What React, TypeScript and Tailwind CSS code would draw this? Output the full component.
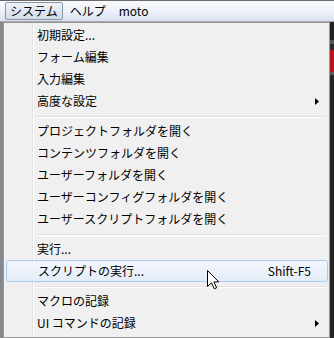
import React from "react";

type Item =
  | { type: "item"; label: string; shortcut?: string; sub?: boolean; active?: boolean }
  | { type: "sep" };

const items: Item[] = [
  { type: "item", label: "初期設定..." },
  { type: "item", label: "フォーム編集" },
  { type: "item", label: "入力編集" },
  { type: "item", label: "高度な設定", sub: true },
  { type: "sep" },
  { type: "item", label: "プロジェクトフォルダを開く" },
  { type: "item", label: "コンテンツフォルダを開く" },
  { type: "item", label: "ユーザーフォルダを開く" },
  { type: "item", label: "ユーザーコンフィグフォルダを開く" },
  { type: "item", label: "ユーザースクリプトフォルダを開く" },
  { type: "sep" },
  { type: "item", label: "実行..." },
  { type: "item", label: "スクリプトの実行...", shortcut: "Shift-F5", active: true },
  { type: "sep" },
  { type: "item", label: "マクロの記録" },
  { type: "item", label: "UI コマンドの記録", sub: true },
];

function Gutter() {
  return (
    <div className="flex h-full shrink-0">
      <div className="w-[27px] h-full border-r border-[#e2e3e3]" />
      <div className="w-px h-full bg-white" />
    </div>
  );
}

function Arrow() {
  return (
    <svg width="4" height="7" viewBox="0 0 4 7" className="ml-auto mr-[9px]">
      <polygon points="0,0 4,3.5 0,7" fill="#000" />
    </svg>
  );
}

export default function App() {
  return (
    <div
      className="relative w-[334px] h-[338px] overflow-hidden bg-[#262626] text-[12px] text-black"
      style={{ fontFamily: '"Noto Sans CJK JP", "Noto Sans", sans-serif' }}
    >
      {/* menu bar */}
      <div className="h-[22px] border-t border-[#6b6b6b] border-b border-b-[#a4a8ae] bg-gradient-to-b from-[#f7f9fc] via-[#eef2f9] to-[#d9e1ef] flex items-center">
        <div className="ml-[5px] h-[18px] px-[4px] border border-[#8a96a6] rounded-[2px] bg-gradient-to-b from-[#eef2f8] to-[#d3dbe8] flex items-center leading-none">
          システム
        </div>
        <div className="ml-[7px] px-[0px] leading-none">ヘルプ</div>
        <div className="ml-[13px] leading-none">moto</div>
      </div>

      <div className="flex h-[316px]">
        <div className="w-[3px] h-full bg-[#85888c]" />
        <div className="w-[327px] h-full border border-[#979797] bg-[#f0f0f0] pt-[1px]">
          {items.map((it, i) =>
            it.type === "sep" ? (
              <div key={i} className="h-[8px] mx-[2px] flex">
                <Gutter />
                <div className="flex-1 pt-[4px] pl-[1px] pr-[1px]">
                  <div className="h-px bg-[#e0e0e0]" />
                  <div className="h-px bg-white" />
                </div>
              </div>
            ) : it.active ? (
              <div
                key={i}
                className="h-[22px] ml-[2px] mr-[1px] flex items-center rounded-[3px] border border-[#aacbf0] bg-gradient-to-b from-[#f3f7fc] to-[#e4ecf8]"
              >
                <div className="w-[30px] shrink-0" />
                <span className="pl-[1px] whitespace-nowrap">{it.label}</span>
                <span className="ml-auto mr-[16px] whitespace-nowrap">{it.shortcut}</span>
              </div>
            ) : (
              <div key={i} className="h-[22px] ml-[2px] mr-[1px] flex items-center">
                <Gutter />
                <span className="pl-[3px] whitespace-nowrap">{it.label}</span>
                {it.sub && <Arrow />}
              </div>
            )
          )}
        </div>
        <div className="flex-1 h-full flex flex-col">
          <div className="h-[18px] bg-[#232323]" />
          <div className="h-[4px] bg-[#555]" />
          <div className="h-[6px] bg-[#2a2a2a]" />
          <div className="h-[22px] bg-[#b01818]" />
          <div className="h-[3px] bg-[#5a5a5a]" />
          <div className="flex-1 bg-[#262626]" />
        </div>
      </div>

      {/* mouse cursor */}
      <svg
        width="13"
        height="20"
        viewBox="0 0 13 20"
        className="absolute left-[207px] top-[270px]"
      >
        <polygon
          points="0.5,0.5 0.5,16.5 4.5,12.8 7.3,18.8 9.6,17.8 6.9,11.9 11.8,11.9"
          fill="#fff"
          stroke="#000"
          strokeWidth="1"
          strokeLinejoin="miter"
        />
      </svg>
    </div>
  );
}
